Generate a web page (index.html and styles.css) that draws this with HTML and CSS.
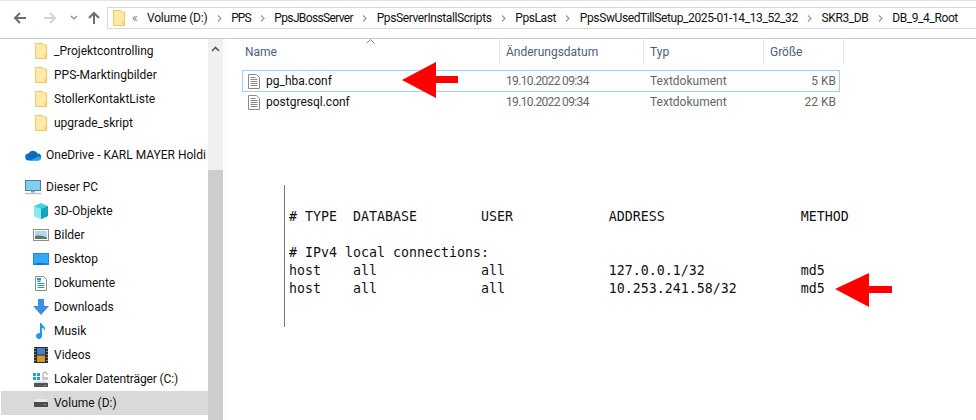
FILE: index.html
```html
<!DOCTYPE html>
<html lang="de">
<head>
<meta charset="utf-8">
<title>DB_9_4_Root</title>
<link rel="stylesheet" href="styles.css">
</head>
<body>
<svg class="defs" width="0" height="0">
  <symbol id="folder" viewBox="0 0 12 16"><path d="M.5 .5h7l1 1.500h3v13.500H.5z" fill="#ffe9a6" stroke="#e8c868"/><path d="M9.500 11.500h2v4h-2z" fill="#f5cf6a"/></symbol>
  <symbol id="doc" viewBox="0 0 12 15"><path d="M.5 .5h8l3 3v11H.5z" fill="#fff" stroke="#8a8a8a"/><path d="M2.500 3.500h5M2.500 5.500h7M2.500 7.500h7M2.500 9.500h7M2.500 11.500h7" stroke="#8a8a8a"/></symbol>
  <symbol id="drive" viewBox="0 0 14 8"><path d="M2 0h10l2 4H0z" fill="#e9e9e9"/><rect y="3" width="14" height="5" fill="#4d4d4d"/><rect x="10" y="5" width="2" height="1" fill="#39d353"/></symbol>
  <symbol id="crumbsep" viewBox="0 0 5 7"><path d="M1 .5l3 3-3 3" fill="none" stroke="#9a9a9a" stroke-width="1.200"/></symbol>
</svg>

<header class="toolbar">
  <svg class="nav" width="14" height="14" viewBox="0 0 14 14"><path d="M13 7H2M7 2 2 7l5 5" fill="none" stroke="#6d6d6d" stroke-width="2"/></svg>
  <svg class="nav fwd" width="14" height="14" viewBox="0 0 14 14"><path d="M1 7h11M7 2l5 5-5 5" fill="none" stroke="#d4d4d4" stroke-width="2"/></svg>
  <svg class="nav chev" width="8" height="6" viewBox="0 0 8 6"><path d="M1 1l3 3 3-3" fill="none" stroke="#8a8a8a" stroke-width="1.200"/></svg>
  <svg class="nav up" width="14" height="14" viewBox="0 0 14 14"><path d="M7 13V2M2 7l5-5 5 5" fill="none" stroke="#6d6d6d" stroke-width="2"/></svg>
  <nav class="address">
    <svg class="addr-folder" width="12" height="16"><use href="#folder"/></svg>
    <span class="more">«</span>
    <span class="crumb first">Volume (D:)</span><span class="sep"><svg width="5" height="7"><use href="#crumbsep"/></svg></span>
    <span class="crumb tightest">PPS</span><span class="sep"><svg width="5" height="7"><use href="#crumbsep"/></svg></span>
    <span class="crumb tighter">PpsJBossServer</span><span class="sep"><svg width="5" height="7"><use href="#crumbsep"/></svg></span>
    <span class="crumb tight">PpsServerInstallScripts</span><span class="sep"><svg width="5" height="7"><use href="#crumbsep"/></svg></span>
    <span class="crumb tight">PpsLast</span><span class="sep"><svg width="5" height="7"><use href="#crumbsep"/></svg></span>
    <span class="crumb tight">PpsSwUsedTillSetup_2025-01-14_13_52_32</span><span class="sep"><svg width="5" height="7"><use href="#crumbsep"/></svg></span>
    <span class="crumb tight">SKR3_DB</span><span class="sep"><svg width="5" height="7"><use href="#crumbsep"/></svg></span>
    <span class="crumb tight">DB_9_4_Root</span>
  </nav>
</header>

<div class="body">
  <aside class="sidebar">
    <ul class="tree">
      <li class="item"><span class="icbox"><svg width="12" height="16"><use href="#folder"/></svg></span>_Projektcontrolling</li>
      <li class="item"><span class="icbox"><svg width="12" height="16"><use href="#folder"/></svg></span>PPS-Marktingbilder</li>
      <li class="item"><span class="icbox"><svg width="12" height="16"><use href="#folder"/></svg></span>StollerKontaktListe</li>
      <li class="item"><span class="icbox"><svg width="12" height="16"><use href="#folder"/></svg></span>upgrade_skript</li>
      <li class="item top gap"><span class="icbox"><svg width="16" height="11" viewBox="0 0 16 11"><path d="M4 10.500a3.500 3.500 0 0 1-.5-7A5 5 0 0 1 9 1a4 4 0 0 1 3.500 2.500A3.500 3.500 0 0 1 13 10.500z" fill="#0f6cbd"/><path d="M4 10.500h9a3 3 0 0 0 3-3c-2-2-4-1-6 1-2 1-4 1-6 2z" fill="#28a8ea"/></svg></span>OneDrive - KARL MAYER Holdi</li>
      <li class="item top gap"><span class="icbox"><svg width="16" height="15" viewBox="0 0 16 15"><rect x=".5" y=".5" width="15" height="10" fill="#7fcdf5" stroke="#5a7d94"/><path d="M6 11h4v1.500H6z" fill="#8aa"/><path d="M0 13.500h16" stroke="#b6c0c6" stroke-width="1.400"/></svg></span>Dieser PC</li>
      <li class="item"><span class="icbox"><svg width="16" height="16" viewBox="0 0 16 16"><path d="M8 0l7 3v10l-7 3-7-3V3z" fill="#45d3e4"/><path d="M8 6l7-3v10l-7 3z" fill="#12a5bd"/><path d="M1 3l7 3v10l-7-3z" fill="#8ae8f0"/></svg></span>3D-Objekte</li>
      <li class="item"><span class="icbox"><svg width="16" height="12" viewBox="0 0 16 12"><rect x=".5" y=".5" width="15" height="11" fill="#fff" stroke="#8d8d8d"/><rect x="2" y="2" width="12" height="8" fill="#b5d4ee"/><path d="M2 10V7c4-1 8 0 12 1.500V10z" fill="#5d7a67"/></svg></span>Bilder</li>
      <li class="item"><span class="icbox"><svg width="16" height="12" viewBox="0 0 16 12"><rect width="16" height="12" fill="#1e88e5"/><rect x="1" y="1" width="14" height="9" fill="#35a8f5"/><rect x="4" y="10.500" width="8" height="1" fill="#0d5fa8"/></svg></span>Desktop</li>
      <li class="item"><span class="icbox"><svg width="12" height="15" viewBox="0 0 12 15"><path d="M.5 .5h8l3 3v11H.5z" fill="#fff" stroke="#8d8d8d"/><path d="M2.500 5.500h3M2.500 7.500h7M2.500 9.500h7M2.500 11.500h7" stroke="#2f8fd8"/><rect x="2" y="2" width="4" height="2.500" fill="#2f8fd8"/></svg></span>Dokumente</li>
      <li class="item"><span class="icbox"><svg width="16" height="16" viewBox="0 0 16 16"><path d="M5 0h6v7h5l-8 9-8-9h5z" fill="#3d8fe0"/></svg></span>Downloads</li>
      <li class="item"><span class="icbox"><svg width="12" height="16" viewBox="0 0 12 16"><path d="M5 0h1.500c.5 3 4.500 3 3.500 8-.5-2-2-3-3-3.300V13a3 3 0 1 1-2-2.800z" fill="#1d9bf0"/></svg></span>Musik</li>
      <li class="item"><span class="icbox"><svg width="14" height="16" viewBox="0 0 14 16"><rect width="14" height="16" fill="#2d2d2d"/><rect x="3" y="1" width="8" height="6.500" fill="#3f83c7"/><rect x="3" y="8.500" width="8" height="6.500" fill="#d4992b"/><path d="M1 1v1M1 4v1M1 7v1M1 10v1M1 13v1M13 1v1M13 4v1M13 7v1M13 10v1M13 13v1" stroke="#ddd"/></svg></span>Videos</li>
      <li class="item"><span class="icbox"><svg width="16" height="16" viewBox="0 0 16 16"><path d="M0 2h3v3H0zM4 2h3v3H4zM0 6h3v3H0zM4 6h3v3H4z" fill="#1e9bf0"/><path d="M10 6V3a2 2 0 0 1 4 0v1" fill="none" stroke="#9a9a9a"/><rect x="9" y="6" width="6" height="3" fill="#c4c4c4"/><path d="M3 10h10l2 2H1z" fill="#dcdcdc"/><rect x="1" y="12" width="14" height="4" fill="#555"/><rect x="11" y="14" width="2" height="1" fill="#39d353"/></svg></span><span class="narrow">Lokaler Datenträger (C:)</span></li>
      <li class="item selected"><span class="icbox"><svg width="14" height="8"><use href="#drive"/></svg></span>Volume (D:)</li>
    </ul>
  </aside>
  <div class="scrollbar">
    <div class="track"><svg width="9" height="6" viewBox="0 0 9 6"><path d="M1 5l3.500-3.500L8 5" fill="none" stroke="#555" stroke-width="1.600"/></svg></div>
    <div class="thumb"></div>
  </div>
  <main class="main">
    <div class="head">
      <svg class="sort" width="9" height="5" viewBox="0 0 9 5"><path d="M.5 4.500l4-4 4 4" fill="none" stroke="#8a8a8a"/></svg>
      <span class="col name">Name</span>
      <span class="col date">Änderungsdatum</span>
      <span class="col type">Typ</span>
      <span class="col size">Größe</span>
    </div>
    <div class="row focused">
      <span class="cell name"><svg class="fic" width="12" height="15"><use href="#doc"/></svg>pg_hba.conf</span>
      <span class="cell date">19.10.2022 09:34</span>
      <span class="cell type">Textdokument</span>
      <span class="cell size">5 KB</span>
    </div>
    <div class="row">
      <span class="cell name"><svg class="fic" width="12" height="15"><use href="#doc"/></svg>postgresql.conf</span>
      <span class="cell date">19.10.2022 09:34</span>
      <span class="cell type">Textdokument</span>
      <span class="cell size">22 KB</span>
    </div>
    <pre class="code"># TYPE  DATABASE        USER            ADDRESS                 METHOD

# IPv4 local connections:
host    all             all             127.0.0.1/32            md5
host    all             all             10.253.241.58/32        md5</pre>
  </main>
</div>

<svg class="arrow a1" width="56" height="36" viewBox="0 0 56 36"><path d="M0 18 34 0v14h22v7H34v15z" fill="#ff0000"/></svg>
<svg class="arrow a2" width="57" height="34" viewBox="0 0 57 34"><path d="M0 16 34 0v13h23v7H34v14z" fill="#ff0000"/></svg>
</body>
</html>
```

FILE: styles.css
```css
* { box-sizing: border-box; }
html, body { margin: 0; padding: 0; }
body {
  position: relative;
  width: 976px;
  height: 420px;
  overflow: hidden;
  background: #fff;
  font: 12px/16px Roboto, "Noto Sans", sans-serif;
  color: #111;
  border-top: 1px solid #e6e6e6;
}
.defs { position: absolute; }

.toolbar {
  display: flex;
  align-items: center;
  height: 38px;
  padding: 0 0 3px 13px;
  border-bottom: 1px solid #c8c8c8;
}
.nav { flex: none; }
.fwd { margin-left: 16px; }
.chev { margin-left: 13px; }
.up { margin-left: 9px; }
.address {
  flex: 1;
  display: flex;
  align-items: center;
  height: 22px;
  margin-left: 6px;
  padding-left: 5px;
  border: 1px solid #d9d9d9;
  border-right: 0;
  white-space: nowrap;
}
.addr-folder { flex: none; }
.more { flex: none; margin-left: 7px; color: #777; width: 15px; }
.crumb { flex: none; }
.first { letter-spacing: -.2px; }
.tight { letter-spacing: -.4px; }
.tighter { letter-spacing: -.65px; }
.tightest { letter-spacing: -1px; }
.sep { flex: none; display: flex; justify-content: center; width: 23.800px; }

.body { display: flex; height: 381px; }

.sidebar { width: 208px; flex: none; overflow: hidden; padding-left: 1px; }
.tree { list-style: none; margin: 0; padding: 0; }
.item {
  display: flex;
  align-items: center;
  height: 24px;
  padding-left: 32px;
  white-space: nowrap;
}
.icbox { flex: none; display: flex; justify-content: center; width: 16px; margin-right: 5px; }
.narrow { letter-spacing: -.12px; }
.top { padding-left: 24px; }
.gap { margin-top: 8px; }
.selected { background: #d9d9d9; }

.scrollbar { width: 15px; flex: none; display: flex; flex-direction: column; background: #f0f0f0; }
.track { height: 131px; display: flex; justify-content: center; padding-top: 7px; }
.thumb { flex: 1; background: #cdcdcd; }

.main { flex: 1; padding-left: 19px; border-left: 1px solid #f5f5f5; margin-left: 2px; }
.head { position: relative; display: flex; height: 26px; }
.sort { position: absolute; left: 121px; top: 0; }
.col {
  display: flex;
  align-items: center;
  padding-left: 6px;
  color: #4c607a;
  height: 25px;
  border-right: 1px solid #e5e5e5;
}
.col.name { width: 255px; padding-left: 0; }
.col.date { width: 144px; }
.col.type { width: 120px; }
.col.size { width: 80px; }

.row {
  display: flex;
  align-items: center;
  width: 598px;
  height: 20px;
  margin-left: -3px;
  border: 1px solid transparent;
}
.focused { height: 22px; margin-top: 5px; border-color: #99d1ff; }
.cell { color: #666; white-space: nowrap; }
.cell.name { display: flex; align-items: center; width: 256px; color: #111; padding-left: 5px; }
.fic { flex: none; margin-right: 6px; }
.cell.date { width: 144px; padding-left: 7px; letter-spacing: -.65px; }
.cell.type { width: 120px; padding-left: 7px; }
.cell.size { width: 73px; text-align: right; }

.code {
  margin: 73px 0 0 39px;
  padding: 23px 0 30px 4px;
  width: 640px;
  height: 142px;
  border-left: 1px solid #7a7a7a;
  font: 13.29px/18px "DejaVu Sans Mono", monospace;
  color: #111;
}

.arrow { position: absolute; }
.a1 { left: 402px; top: 61px; }
.a2 { left: 835px; top: 272px; }
```
